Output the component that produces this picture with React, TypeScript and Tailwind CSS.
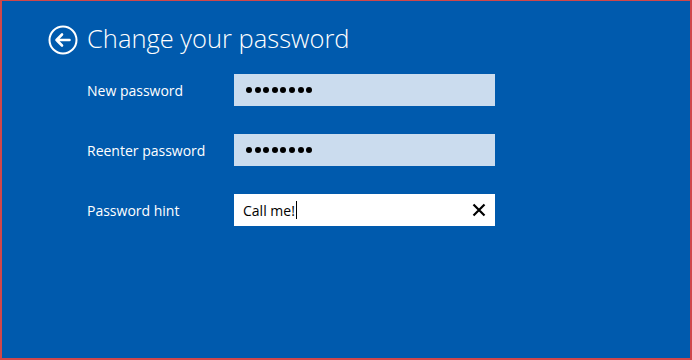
import React from 'react';

const font = { fontFamily: '"Open Sans", "Noto Sans", sans-serif' };

const Dots = () => (
  <div className="flex items-center gap-[2.6px] pl-[12px]">
    {Array.from({ length: 8 }).map((_, i) => (
      <span key={i} className="block w-[6px] h-[6px] rounded-full bg-black" />
    ))}
  </div>
);

const Row = ({ label, children, light }: { label: string; children: React.ReactNode; light?: boolean }) => (
  <div className="flex items-center h-[32px]">
    <div className="w-[147px] text-[14px] text-white">{label}</div>
    <div className={`w-[261px] h-[32px] flex items-center ${light ? 'bg-white' : 'bg-[#cbdcee]'}`}>{children}</div>
  </div>
);

export default function App() {
  return (
    <div className="w-[692px] h-[360px] bg-[#d0474a] pt-[1px] pl-[2px] pr-[2px] pb-[2px]" style={font}>
      <div className="w-full h-full bg-[#005aad] pl-[46px] pt-[24px]">
        {/* Header */}
        <div className="flex items-center gap-[9px]">
          <svg width="30" height="30" viewBox="0 0 30 30" fill="none" stroke="white">
            <circle cx="15" cy="15" r="13.5" strokeWidth="2" />
            <path d="M8.5 15h13M14 9.5l-5.5 5.5 5.5 5.5" strokeWidth="2.6" strokeLinecap="round" strokeLinejoin="round" />
          </svg>
          <h1 className="text-[25.5px] font-[350] text-white leading-none -mt-[3px]">Change your password</h1>
        </div>

        {/* Form */}
        <div className="pl-[39px] mt-[19px] flex flex-col gap-[28px]">
          <Row label="New password"><Dots /></Row>
          <Row label="Reenter password"><Dots /></Row>
          <Row label="Password hint" light>
            <div className="flex items-center justify-between w-full pl-[9px] pr-[9px]">
              <div className="flex items-center text-[14px] text-black">
                Call me!
                <span className="block w-[1px] h-[18px] bg-black ml-[1px]" />
              </div>
              <svg width="14" height="14" viewBox="0 0 14 14" stroke="black" strokeWidth="2.2">
                <path d="M1.5 1.5l11 11M12.5 1.5l-11 11" />
              </svg>
            </div>
          </Row>
        </div>
      </div>
    </div>
  );
}
